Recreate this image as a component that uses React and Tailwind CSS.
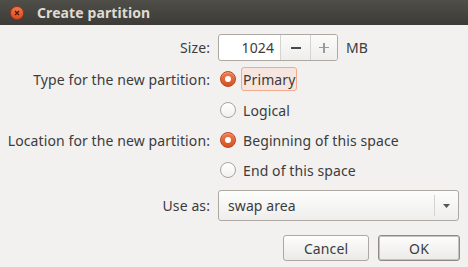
import React from "react";

function Radio({ checked }) {
  if (checked) {
    return (
      <div className="w-[16px] h-[16px] rounded-full border border-[#b9461f] bg-gradient-to-b from-[#f07a4e] to-[#d5521f] flex items-center justify-center shadow-[inset_0_1px_0_rgba(255,255,255,0.3)]">
        <div className="w-[6px] h-[6px] rounded-full bg-white" />
      </div>
    );
  }
  return (
    <div className="w-[16px] h-[16px] rounded-full border border-[#a8a5a0] bg-gradient-to-b from-white to-[#f1f0ee]" />
  );
}

function Row({ label, children, className = "" }) {
  return (
    <div className={"flex items-center " + className}>
      <div className="w-[210px] text-right pr-0 shrink-0 whitespace-nowrap">{label}</div>
      <div className="ml-[10px] flex items-center">{children}</div>
    </div>
  );
}

export default function App() {
  return (
    <div
      className="w-[468px] h-[267px] bg-[#f2f1f0] text-[#3c3c3c] text-[14px] tracking-[0.1px] overflow-hidden"
      style={{ fontFamily: '"Noto Sans", "Open Sans", sans-serif' }}
    >
      <div className="h-[25px] bg-gradient-to-b from-[#504e49] to-[#3c3b37] flex items-center">
        <div className="ml-[10px] w-[14px] h-[14px] rounded-full bg-gradient-to-b from-[#f4774b] to-[#df4b1f] border border-[#9c3514] flex items-center justify-center">
          <svg width="6" height="6" viewBox="0 0 6 6">
            <path d="M1 1L5 5M5 1L1 5" stroke="#4a1a0a" strokeWidth="1.3" />
          </svg>
        </div>
        <div className="ml-[13px] font-bold text-[14px] text-[#dfdbd2] leading-none">Create partition</div>
      </div>

      <Row label="Size:" className="mt-[9px] h-[27px]">
        <div className="-ml-[2px] w-[120px] h-[27px] rounded-[3px] border border-[#aca8a2] bg-white flex overflow-hidden">
          <div className="w-[61px] flex items-center justify-end pr-[6px]">1024</div>
          <div className="w-[30px] border-l border-[#d6d3cf] bg-gradient-to-b from-[#fbfbfa] to-[#efeeec] flex items-center justify-center">
            <div className="w-[10px] h-[2px] bg-[#4a4a4a]" />
          </div>
          <div className="flex-1 border-l border-[#d6d3cf] bg-gradient-to-b from-[#fbfbfa] to-[#efeeec] flex items-center justify-center relative">
            <div className="w-[10px] h-[1.5px] bg-[#9a9a9a]" />
            <div className="absolute w-[1.5px] h-[10px] bg-[#9a9a9a]" />
          </div>
        </div>
        <span className="ml-[8px]">MB</span>
      </Row>

      <Row label="Type for the new partition:" className="mt-[3px] h-[30px]">
        <Radio checked />
        <div className="ml-[5px] h-[24px] px-[1px] flex items-center rounded-[3px] border border-[#f2ab8d] bg-[#f7e6df]">
          Primary
        </div>
      </Row>
      <Row label="" className="mt-[1px] h-[30px]">
        <Radio />
        <span className="ml-[7px]">Logical</span>
      </Row>
      <Row label="Location for the new partition:" className="h-[30px]">
        <Radio checked />
        <span className="ml-[7px]">Beginning of this space</span>
      </Row>
      <Row label="" className="h-[30px]">
        <Radio />
        <span className="ml-[7px]">End of this space</span>
      </Row>

      <Row label="Use as:" className="mt-[5px] h-[31px]">
        <div className="-ml-[2px] w-[241px] h-[31px] rounded-[3px] border border-[#aca8a2] bg-gradient-to-b from-[#fdfdfc] to-[#efeeec] flex items-center">
          <div className="flex-1 pl-[9px]">swap area</div>
          <div className="h-[21px] border-l border-[#d6d3cf]" />
          <div className="w-[23px] flex items-center justify-center">
            <svg width="7" height="4" viewBox="0 0 7 4">
              <path d="M0 0H7L3.5 4Z" fill="#555" />
            </svg>
          </div>
        </div>
      </Row>

      <div className="mt-[14px] flex justify-end pr-[8px] gap-[9px]">
        <div className="w-[86px] h-[26px] rounded-[3px] border border-[#aca8a2] bg-gradient-to-b from-[#fdfdfc] to-[#ebeae8] flex items-center justify-center">
          Cancel
        </div>
        <div className="w-[82px] h-[26px] rounded-[3px] border border-[#8e8a85] shadow-[inset_0_0_0_1px_#c6c3bf] bg-gradient-to-b from-[#fdfdfc] to-[#ebeae8] flex items-center justify-center">
          OK
        </div>
      </div>
    </div>
  );
}
